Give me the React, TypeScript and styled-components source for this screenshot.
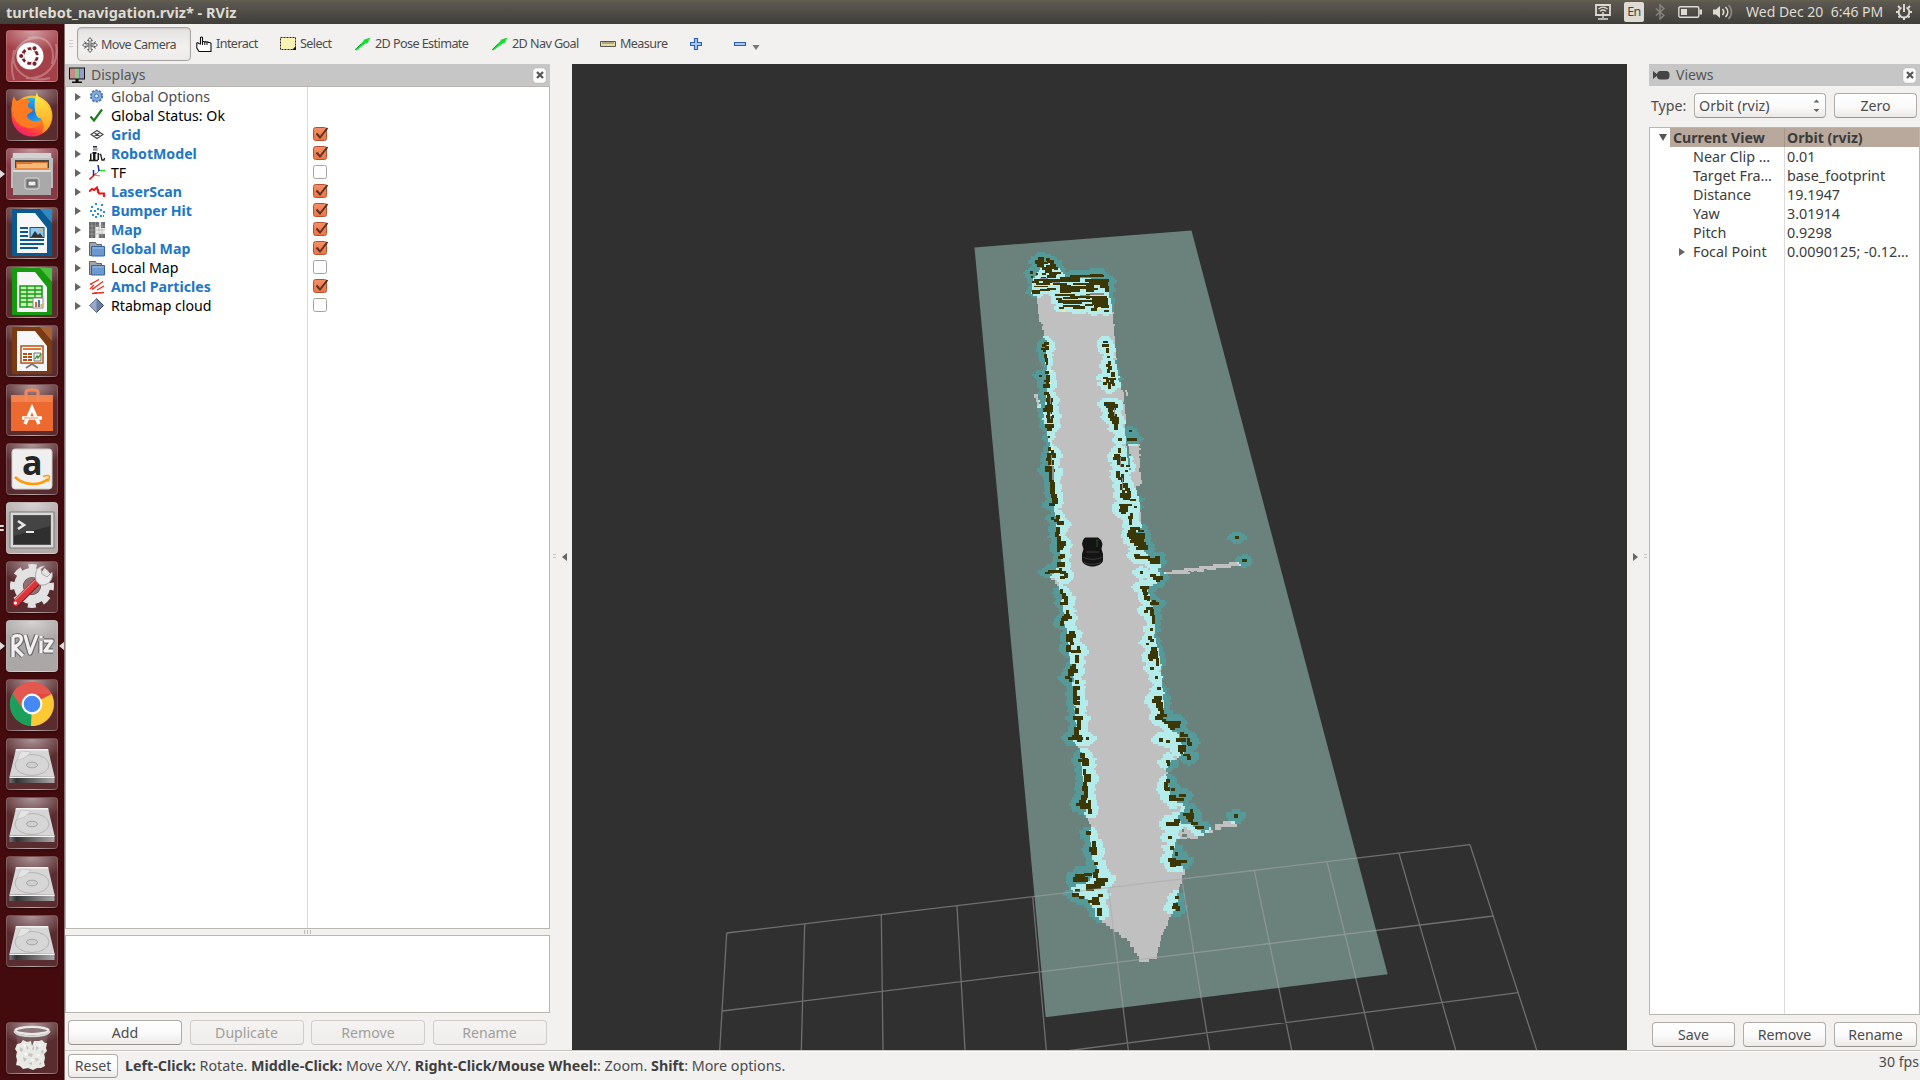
import React from "react";
import styled, { createGlobalStyle, css } from "styled-components";

const Global = createGlobalStyle`
  * { box-sizing: border-box; }
  html, body { margin: 0; padding: 0; background: #f2f1f0; overflow: hidden; }
  body { font-family: "Noto Sans", "Open Sans", sans-serif; font-size: 14.15px; color: #4c4c4c; line-height: 19px; }
`;

/* ---------- shell ---------- */
const Screen = styled.div`
  width: 1920px; height: 1080px; display: flex; flex-direction: column; overflow: hidden; background: #f2f1f0;
`;
const TopBar = styled.header`
  height: 24px; flex: none; display: flex; align-items: center; padding: 0 8px 0 6px;
  background: linear-gradient(#65624f 0, #5c5952 2px, #3f3e38 100%); color: #dfdbd2;
`;
const WindowTitle = styled.h1`
  margin: 0; flex: 1; font-size: 14.5px; font-weight: 700; line-height: 23px; white-space: pre;
`;
const Indicators = styled.div`display: flex; align-items: center; height: 24px;`;
const Indicator = styled.span<{ $w: number }>`
  width: ${(p) => p.$w}px; height: 24px; display: flex; align-items: center; flex: none;
`;
const Lang = styled.span`
  width: 20px; height: 20px; border-radius: 2px; background: #dfdbd2; color: #45433d; font-size: 12.5px; line-height: 20px;
  text-align: center; letter-spacing: -0.6px;
`;
const Clock = styled.span`width: 150px; white-space: pre; font-size: 14px; line-height: 24px;`;
const Body = styled.div`flex: 1; display: flex; min-height: 0;`;

/* ---------- launcher ---------- */
const Launcher = styled.nav`
  width: 65px; flex: none; background: linear-gradient(90deg, #430b0e 0 61px, #3a090c 64px, #8a7574 64px);
  padding: 6px 0 6px 6px; display: flex; flex-direction: column; gap: 7px;
`;
const tones = { dark: "#4b1a1e", red: "#9c3038", rose: "#7c2733", light: "#aaa3a1", grey: "#a5a09f" };
type Tone = keyof typeof tones;
const Tile = styled.div<{ $tone: Tone; $last?: boolean }>`
  width: 52px; height: 52px; flex: none; border-radius: 4px; position: relative;
  border: 1px solid rgba(255, 255, 255, 0.17);
  background: radial-gradient(ellipse 34px 22px at 50% 0, rgba(255, 255, 255, 0.5), rgba(255, 255, 255, 0) 100%),
    linear-gradient(rgba(255, 255, 255, 0.08), rgba(255, 255, 255, 0.08)), ${(p) => tones[p.$tone]};
  box-shadow: 0 1px 2px rgba(0, 0, 0, 0.35);
  ${(p) => p.$last && css`margin-top: auto;`}
  & > svg { display: block; margin: -1px; overflow: visible; }
`;
const Pip = styled.i<{ $side: "l" | "r"; $y: number }>`
  position: absolute; top: ${(p) => p.$y}px; width: 0; height: 0; border: 4px solid transparent;
  ${(p) => (p.$side === "l" ? css`left: -7px; border-left: 5px solid #ddd; border-right: 0;` : css`right: -7px; border-right: 5px solid #ddd; border-left: 0;`)}
`;
const Dash = styled.i<{ $y: number }>`
  position: absolute; left: -7px; top: ${(p) => p.$y}px; width: 4px; height: 2px; background: #ddd; border-radius: 0 1px 1px 0;
`;

/* ---------- window ---------- */
const Window = styled.main`flex: 1; min-width: 0; display: flex; flex-direction: column;`;
const Toolbar = styled.div`height: 40px; flex: none; display: flex; align-items: flex-start; padding-top: 3px;`;
const Grip = styled.span`
  width: 12px; height: 33px; padding-left: 4px; display: flex; align-items: center;
  &::before { content: ""; width: 4px; height: 8px; background: repeating-linear-gradient(#cfcdca 0 1px, transparent 1px 3px); }
`;
const Tool = styled.span<{ $w: number; $active?: boolean }>`
  width: ${(p) => p.$w}px; height: 33px; flex: none; display: flex; align-items: center; gap: 4px;
  font-size: 12.6px; letter-spacing: -0.58px; white-space: nowrap;
  ${(p) => p.$active && css`
    margin-right: 5px; padding: 1px 0 0 4px; height: 34px; border: 1px solid #a9a6a2; border-radius: 4px; gap: 3px;
    background: linear-gradient(#e4e2e0, #f2f1f0 60%, #edebe9); box-shadow: inset 0 1px 2px rgba(0,0,0,.12);
  `}
`;
const Work = styled.div`flex: 1; min-height: 0; display: flex;`;
const Dock = styled.section<{ $w: number }>`width: ${(p) => p.$w}px; flex: none; display: flex; flex-direction: column;`;
const DockTitle = styled.div`
  height: 22px; flex: none; display: flex; align-items: center; gap: 5px; padding: 0 4px 0 4px; background: #c6c6c6; color: #555;
  & > span { flex: 1; line-height: 22px; font-size: 14px; }
`;
const CloseBox = styled.b`
  width: 13px; height: 15px; border: 1px solid #eee; border-radius: 3px; background: #fbfbfb; box-shadow: 0 0 1px #999;
  display: flex; align-items: center; justify-content: center;
`;
const Tree = styled.div<{ $split: number; $h: number }>`
  height: ${(p) => p.$h}px; flex: none; border: 1px solid #b9b6b0; 
  background: linear-gradient(#dcdbd9, #dcdbd9) ${(p) => p.$split}px 0 / 1px 100% no-repeat #fff;
`;
const Row = styled.div<{ $bold?: boolean; $tone?: string }>`
  height: 19px; display: grid; grid-template-columns: 23px 22px 202px 1fr; align-items: center; white-space: nowrap;
  color: ${(p) => p.$tone || "#000"}; font-weight: ${(p) => (p.$bold ? 700 : 400)};
`;
const Expander = styled.i<{ $open?: boolean }>`
  width: 0; height: 0; margin-left: 9px; justify-self: start;
  ${(p) => p.$open ? css`border: 4px solid transparent; border-top: 7px solid #555; border-bottom: 0;`
    : css`border: 4px solid transparent; border-left: 6px solid #666; border-right: 0;`}
`;
const Check = styled.span<{ $on: boolean }>`
  width: 14px; height: 14px; margin-top: -1px; border-radius: 2.5px; border: 1px solid ${(p) => (p.$on ? "#b2532f" : "#a5a29d")};
  background: ${(p) => (p.$on ? "linear-gradient(#f58e66, #ec7547)" : "#fff")};
  & > svg { display: block; overflow: visible; margin: -1px; }
`;
const Splitter = styled.div`
  height: 6px; flex: none; display: flex; align-items: center; justify-content: center;
  &::before { content: ""; width: 7px; height: 4px; background: repeating-linear-gradient(90deg, #bbb 0 1px, transparent 1px 3px); }
`;
const HelpBox = styled.div`height: 78px; flex: none; border: 1px solid #b9b6b0; background: #fff;`;
const Buttons = styled.div<{ $cols: string; $gap: number; $pad: string }>`
  display: grid; grid-template-columns: ${(p) => p.$cols}; gap: ${(p) => p.$gap}px; padding: ${(p) => p.$pad};
`;
const Button = styled.button<{ $off?: boolean; $h?: number }>`
  height: ${(p) => p.$h || 25}px; padding: 0; font: inherit; line-height: 22px; text-align: center;
  color: ${(p) => (p.$off ? "#a09e9b" : "#4c4c4c")};
  border: 1px solid ${(p) => (p.$off ? "#d0cdca" : "#b0ada9")}; border-bottom-color: ${(p) => (p.$off ? "#c5c2bf" : "#989591")};
  border-radius: 4px; background: ${(p) => (p.$off ? "linear-gradient(#f5f4f3, #eeedeb)" : "linear-gradient(#fff, #fbfafa 55%, #ebeae8)")};
`;
const Collapse = styled.div<{ $w: number; $right?: boolean }>`
  width: ${(p) => p.$w}px; flex: none; display: flex; align-items: center; justify-content: center; gap: 6px;
  flex-direction: ${(p) => (p.$right ? "row-reverse" : "row")};
  padding: 0 ${(p) => (p.$right ? "0 0 4px" : "2px 0 0")};
  &::before { content: ""; width: 3px; height: 6px; background: repeating-linear-gradient(#c5c3c0 0 1px, transparent 1px 3px); }
  &::after { content: ""; border: 4px solid transparent; 
    ${(p) => (p.$right ? css`border-left: 5px solid #666; border-right: 0;` : css`border-right: 5px solid #666; border-left: 0;`)} }
`;
const Viewport = styled.div`width: 1055px; flex: none; background: #303030; & > svg { display: block; }`;

const ViewType = styled.div`
  height: 41px; flex: none; display: grid; grid-template-columns: 43px 132px 83px; column-gap: 0; align-items: start; padding: 7px 3px 0 2px;
  & > span { line-height: 25px; }
  & > button { margin-left: 8px; width: 83px; }
`;
const Combo = styled.div`
  height: 25px; border: 1px solid #b0ada9; border-bottom-color: #989591; border-radius: 4px; padding: 0 5px 0 4px; display: flex;
  align-items: center; justify-content: space-between; background: linear-gradient(#fff, #fbfafa 55%, #ebeae8); font-size: 14.3px;
`;
const Prop = styled.div<{ $head?: boolean }>`
  height: 19px; display: grid; grid-template-columns: 20px ${(p) => (p.$head ? "" : "20px")} ${(p) => (p.$head ? 114 : 94)}px 1fr; align-items: center;
  color: #3c3c3c; white-space: nowrap; line-height: 19px; font-size: ${(p) => (p.$head ? 14.15 : 14.35)}px; font-weight: ${(p) => (p.$head ? 700 : 400)};
  ${(p) => p.$head && css`background: linear-gradient(90deg, #fff 20px, #b8a99c 20px 134px, #a3968a 134px 135px, #b8a99c 135px);`}
  & > span { padding-left: 3px; }
`;
const StatusBar = styled.footer`
  height: 30px; flex: none; border-top: 1px solid #c8c5c1; display: flex; align-items: flex-start; padding: 3px 1px 0 3px; gap: 7px;
  box-shadow: inset 0 1px #fbfbfa;
  & > button { width: 50px; }
`;
const Hint = styled.p`margin: 0; flex: 1; line-height: 24px; font-size: 14.3px; white-space: pre; & b { color: #404040; }`;
const Fps = styled.span`line-height: 16px;`;

/* ---------- launcher artwork ---------- */
const S52 = (p: { children: React.ReactNode }) => <svg width="52" height="52" viewBox="0 0 52 52">{p.children}</svg>;
const Ubuntu = () => (
  <S52>
    <g fill="none" stroke="#fff" strokeOpacity=".28" strokeWidth="2">
      <path d="M8 50C1 28 12 8 32 8M44 48C20 54 4 40 8 20M50 14C54 34 40 50 20 48M22 8c20-4 28 10 24 26" />
    </g>
    <circle cx="24" cy="26" r="13.500" fill="#fff" />
    <circle cx="24" cy="26" r="7.400" fill="none" stroke="#7d2029" strokeWidth="2.800" strokeDasharray="13 2.500" strokeDashoffset="-1.300" />
    <g fill="#7d2029" stroke="#fff" strokeWidth="1.200"><circle cx="15.200" cy="26" r="2.700" /><circle cx="28.500" cy="18.300" r="2.700" /><circle cx="28.500" cy="33.700" r="2.700" /></g>
  </S52>
);
const Firefox = () => (
  <S52>
    <defs>
      <linearGradient id="fx" x1=".8" y1="0" x2=".2" y2="1"><stop offset="0" stopColor="#ffdf3a" /><stop offset=".45" stopColor="#ff8a16" /><stop offset=".8" stopColor="#ff3647" /><stop offset="1" stopColor="#e3158a" /></linearGradient>
      <radialGradient id="fb"><stop offset="0" stopColor="#1d6fe0" /><stop offset="1" stopColor="#16b5f5" /></radialGradient>
      <linearGradient id="fy" x1="0" y1="0" x2="0" y2="1"><stop offset="0" stopColor="#fff04a" /><stop offset="1" stopColor="#ff9b1e" /></linearGradient>
    </defs>
    <circle cx="26" cy="27" r="20.500" fill="url(#fx)" />
    <circle cx="25" cy="23" r="14" fill="url(#fb)" />
    <path d="M31 3c0 6 7 8 11 15 6 10 3 22-6 26 3-5 2-12-2-15-4 1-8-12-3-26z" fill="url(#fy)" />
    <path d="M6 15c0-4 2-8 2-8s1 4 3 5c5-3 11-2 14 1-3 0-4 3-2 6 2 1 4 1 4 2-1 3-6 3-6 6 0 5 9 6 14 4 2 5-6 9-14 8C10 37 3 28 6 15z" fill="#ff7b22" />
    <path d="M6 15c-1 10 3 22 16 24-8 2-18-7-16-24z" fill="#ff3a48" />
  </S52>
);
const Files = () => (
  <S52>
    <path d="M7 5h38l1 12H6z" fill="#d2d2d2" /><path d="M5 10h42v30H5z" fill="#bdbdbd" />
    <path d="M9 12h34v12H9z" fill="#4c4844" /><path d="M10 14h32v10H10z" fill="#e0742e" /><path d="M11 16h14l2-1h14v8H11z" fill="#f6b978" /><path d="M9 20h34v3H9z" fill="#e98b45" />
    <path d="M7 22h38v25H7z" fill="#a9a9a9" /><path d="M7 22h38v2H7z" fill="#dcdcdc" />
    <rect x="19" y="30" width="14" height="11" rx="2" fill="#888" stroke="#ddd" /><rect x="22" y="33" width="8" height="5" fill="#eee" stroke="#555" />
  </S52>
);
const Doc = (p: { c: string; f: string; children: React.ReactNode }) => (
  <S52>
    <path d="M7 3h27l11 14v31H7z" fill={p.c} strokeLinejoin="round" stroke={p.c} strokeWidth="2" />
    <path d="M11 6h18l12 15v25H11z" fill="#f7f7f7" /><path d="M34 2h12v14z" fill={p.f} />
    {p.children}
  </S52>
);
const Writer = () => (
  <Doc c="#0a5a92" f="#2b8bc4">
    <path d="M14 21h8M14 25h8M14 29h8M14 33h24M14 37h24M14 41h18" stroke="#0a5a92" strokeWidth="2" />
    <rect x="24" y="20.500" width="14" height="10" fill="#8dc8ee" stroke="#0a5a92" /><path d="M25 30l4-6 3 4 2-2 3 4z" fill="#333" /><circle cx="35" cy="23" r="1.500" fill="#e8b040" />
  </Doc>
);
const Calc = () => (
  <Doc c="#159a10" f="#4cc240">
    <path d="M14 20h22v21H14z" fill="#c8f3b8" stroke="#159a10" strokeWidth="1.500" /><path d="M14 24h22M14 28h22M14 32h22M14 36h22M21 20v21M29 20v21" stroke="#159a10" strokeWidth="1.300" />
    <rect x="27" y="32" width="10" height="10" fill="#fff" stroke="#888" /><path d="M29 36h2v5h-2z" fill="#e0641e" /><path d="M32 34h2v7h-2z" fill="#2c82c8" /><path d="M34.500 38h2v3h-2z" fill="#e8b020" />
  </Doc>
);
const Impress = () => (
  <Doc c="#7a3a12" f="#a8622e">
    <rect x="15" y="21" width="22" height="17" fill="#fff" stroke="#b0501a" strokeWidth="1.500" /><path d="M17 24h18" stroke="#d9793c" strokeWidth="2" />
    <path d="M17 29h4M17 32h4M17 35h4M22 29h4M22 32h4M22 35h4" stroke="#b0501a" strokeWidth="1.800" /><path d="M28 28h7v8h-7z" fill="#eee" stroke="#777" /><path d="M29 34l2-3 1 2 3-4" stroke="#2c9a2c" fill="none" strokeWidth="1.300" />
    <path d="M26 38v2M20 43l6-4 6 4" stroke="#777" strokeWidth="1.800" fill="none" />
  </Doc>
);
const Bag = () => (
  <S52>
    <path d="M5 11h42v36H5z" fill="#ec6a30" /><path d="M5 11h42l-1 7H6z" fill="#f2834c" /><path d="M20 18V8c0-3 12-3 12 0v10" fill="none" stroke="#f08a5c" strokeWidth="3" />
    <path d="M19 40l7-16 7 16M16 34h20" stroke="#fff" strokeWidth="3.400" fill="none" /><path d="M18 34h14" stroke="#f2a070" strokeWidth="1.200" />
  </S52>
);
const Letter = styled.text<{ $size: number }>`font: 700 ${(p) => p.$size}px "Open Sans", sans-serif;`;
const Amazon = () => (
  <S52>
    <rect x="6" y="6" width="40" height="40" rx="3" fill="#efefef" stroke="#ccc" />
    <Letter $size={34} x="16" y="32" fill="#252525">a</Letter>
    <path d="M9 34c9 9 25 9 33 2" fill="none" stroke="#ff9a0c" strokeWidth="2.600" /><path d="M37 33.500c3-1 6-1 6.500 0 0 2-1 4-2 5" fill="none" stroke="#ff9a0c" strokeWidth="1.600" />
  </S52>
);
const Terminal = () => (
  <S52>
    <path d="M4 10h44v36H4z" fill="#d9d9d9" stroke="#777" /><path d="M7 13h38v30H7z" fill="#555" /><path d="M8 14h36v28H8z" fill="#2f2f2f" /><path d="M8 14h36v10L8 34z" fill="#444" />
    <path d="M12 19l6 4-6 4" fill="none" stroke="#e8e8e8" strokeWidth="2.600" /><path d="M20 30h8" stroke="#e8e8e8" strokeWidth="2" />
  </S52>
);
const Settings = () => (
  <S52>
    <circle cx="26" cy="25" r="13.500" fill="none" stroke="#e2e2e2" strokeWidth="9" />
    <circle cx="26" cy="25" r="19.500" fill="none" stroke="#e2e2e2" strokeWidth="5" strokeDasharray="8 7.310" strokeDashoffset="4" />
    <circle cx="26" cy="25" r="8.500" fill="#8f7274" />
    <path d="M10 42L31 21" stroke="#8e1418" strokeWidth="8" strokeLinecap="round" /><path d="M10 42L31 21" stroke="#d9353b" strokeWidth="6" strokeLinecap="round" /><path d="M9 39L29 19" stroke="#f07a7a" strokeWidth="1.200" />
    <path d="M30 20l4 4c8 1 14-5 12-13l-5 5-5-3-1-5 4-3c-7-1-11 5-9 15z" fill="#e9e9e9" stroke="#999" strokeWidth=".8" /><circle cx="9.500" cy="42" r="1.500" fill="#fff" />
  </S52>
);
const RVizMark = () => (
  <S52>
    <g fill="none" strokeLinejoin="round">
      <path d="M7 37V17M7 17c10-5 12 6 1 10l9 9M19 15l5 18 7-18M35 21v12M35 16v2M38 21h8l-7 10h8" stroke="#6f6b6a" strokeWidth="5.500" />
      <path d="M7 37V17M7 17c10-5 12 6 1 10l9 9M19 15l5 18 7-18M35 21v12M35 16v2M38 21h8l-7 10h8" stroke="#f0f0f0" strokeWidth="3.200" />
    </g>
  </S52>
);
const Chrome = () => (
  <S52>
    <circle cx="26" cy="25" r="22" fill="#e2493f" /><path d="M26 25L6.500 14.500A22 22 0 0 0 25 47z" fill="#1ba05c" /><path d="M26 25L25 47a22 22 0 0 0 20.500-32z" fill="#fcc934" />
    <path d="M6.500 14.500A22 22 0 0 1 45.500 15H26L16 29z" fill="#e2584f" /><circle cx="26" cy="25" r="10.400" fill="#fff" /><circle cx="26" cy="25" r="8.300" fill="#4688f4" />
  </S52>
);
const Disk = () => (
  <S52>
    <defs><linearGradient id="dk" x1="0" y1="0" x2="1" y2="0"><stop offset="0" stopColor="#777" /><stop offset=".15" stopColor="#333" /><stop offset="1" stopColor="#aaa" /></linearGradient></defs>
    <path d="M10 11h32l6.500 27.500h-45z" fill="#d6d6d6" /><path d="M10 11h32l.5 1.500h-33z" fill="#f3f3f3" /><path d="M3.500 38.500h45V45h-45z" fill="url(#dk)" /><path d="M3.500 38.500h45v1.500h-45z" fill="#f4f4f4" />
    <ellipse cx="26" cy="27" rx="17" ry="10.500" fill="none" stroke="#b5b5b5" /><ellipse cx="26" cy="27" rx="5.500" ry="2.800" fill="#cfcfcf" stroke="#a5a5a5" /><path d="M11 22c8-1 10-4 14-8l-10-1z" fill="#e4e4e4" stroke="#bbb" strokeWidth=".6" />
  </S52>
);
const Trash = () => (
  <S52>
    <path d="M10 10l4 34c4 4 20 4 24 0l4-34z" fill="#857273" fillOpacity=".45" />
    <g fill="#e9e9e6">
      <path d="M11 22l4-1 2-3 4 2 4-1 1 5 2-5 5 0 3-1 3 3 2 0-1 5 1 3-3 3 1 4-1 4 1 4-4 2-4 0-4 2-5-2-5 1-3-3-4-1 1-5-1-4 1-4-2-3z" />
    </g>
    <g fill="#c3c3bf"><path d="M14 25l3 2-1 3-2-1zM20 23l3 3-2 2zM23 31l4 1-1 3-4-1zM30 24l3 2-3 3zM35 28l3 1-2 4zM29 36l4 1-3 3zM17 35l4 2-3 3zM26 27l2-4 0 6zM22 41l4-1 0 3zM34 40l2 2-3 1z" /></g>
    <g fill="#fff"><path d="M17 22l3 1-1 3zM32 21l3 2-1 2zM18 31l3 0-1 3zM31 32l3 1-2 2zM25 37l3 0-2 2z" /></g>
    <ellipse cx="26" cy="8.500" rx="16.500" ry="3.600" fill="#8d7778" stroke="#e9e9e6" strokeWidth="2.400" /><path d="M8.500 9c0 7 35 7 35 0" fill="none" stroke="#d4d4d1" strokeWidth="2" />
  </S52>
);

const launcher: { art: () => React.JSX.Element; tone: Tone; pip?: number; twin?: boolean; focus?: boolean }[] = [
  { art: Ubuntu, tone: "red" }, { art: Firefox, tone: "dark" }, { art: Files, tone: "rose", pip: 21 }, { art: Writer, tone: "dark" },
  { art: Calc, tone: "dark" }, { art: Impress, tone: "dark" }, { art: Bag, tone: "dark" }, { art: Amazon, tone: "dark" },
  { art: Terminal, tone: "light", twin: true }, { art: Settings, tone: "dark" }, { art: RVizMark, tone: "grey", pip: 21, focus: true },
  { art: Chrome, tone: "dark" }, { art: Disk, tone: "dark" }, { art: Disk, tone: "dark" }, { art: Disk, tone: "dark" }, { art: Disk, tone: "dark" },
];

/* ---------- 16px icons ---------- */
const I = (p: { children: React.ReactNode; w?: number }) => (
  <svg width={p.w || 16} height="16" viewBox={`0 0 ${p.w || 16} 16`}>{p.children}</svg>
);
const icons: Record<string, React.JSX.Element> = {
  options: <I><circle cx="7.500" cy="7" r="5.600" fill="#7fa6d6" stroke="#4a78b5" strokeWidth="2" strokeDasharray="2.400 1.100" /><circle cx="7.500" cy="7" r="4.500" fill="#86abd9" /><circle cx="7.500" cy="7" r="2" fill="#dce8f6" stroke="#4673ad" /></I>,
  ok: <I><path d="M1.500 8.500L5 12.500 13 1.500" fill="none" stroke="#1d7a1d" strokeWidth="2.200" /></I>,
  grid: <I><path d="M2 7.500l6-4 6 4-6 4zM5 5.500l6 4M11 5.500l-6 4" fill="none" stroke="#444" strokeWidth="1.100" /></I>,
  robot: <I><path d="M4 .8h4" stroke="#223" strokeWidth="1.500" /><path d="M4 3.500h4.500" stroke="#99a" strokeWidth="2.500" /><path d="M1 8l1.500-1V14H1zM3.500 6h4v2h-1v6H4V8h-.5zM8.500 7h1.500v7H8.500z" fill="#1a1a1a" /><path d="M0 14.500h9M10.500 8.500h1.200L13 14h2l.6-2" fill="none" stroke="#222" strokeWidth="1.300" /></I>,
  tf: <I><path d="M7 8.500L.5 14.500" stroke="#e02020" strokeWidth="1.600" /><path d="M9 5.500h7" stroke="#20e020" strokeWidth="1.500" /><path d="M10 6L9 0M4.500 11V5" stroke="#2020d0" strokeWidth="1.500" /><path d="M4.500 11.500L10 6M5 10l6 1" stroke="#d08020" fill="none" /></I>,
  laser: <I><path d="M0 7.500l3-2.500 2 1 3-2.500 1 4 1 2h5v3.500M9 5v4" fill="none" stroke="#f01010" strokeWidth="1.900" /></I>,
  bumper: <I><path d="M6 0h2v2H6zM12 1h2v2h-2zM2 3h2v2H2zM8 5h2v2H8zM1 7h2v2H1zM5 7h2v2H5zM11 6h2v2h-2zM14 8h2v2h-2zM8 10h2v2H8zM3 11h2v2H3zM6 13h2v2H6zM11 12h2v2h-2zM14 12h1v2h-1z" fill="#1e90f0" /></I>,
  map: <I><path d="M0 0h16v16H0z" fill="#eee" /><path d="M0 0h10v5H6v11H0zM12 0h4v6h-4zM10 12h6v4h-6z" fill="#6a6a6a" /><path d="M3 0v16M6.500 0v16M10 0v16M13 0v16M0 4h16M0 8h16M0 12h16" stroke="#aaa" strokeWidth=".6" /></I>,
  folder: <I><path d="M.5 1.500h6l1 2h5v11H.5z" fill="#a3a3a3" stroke="#666" /><path d="M2.500 5.500h13v9.500h-13z" fill="#6d99d2" stroke="#37639d" /><path d="M3.500 7h11" stroke="#9fc0ea" /></I>,
  amcl: <I><path d="M1 5.500l9-5M3 10.500l11-8M1 10l4-4M3 14.500l12-1M8 11l7-4" stroke="#ee2a1a" strokeWidth="1.300" /><path d="M1 4.500l3-.5-1 2zM3 9l3-.5-1.500 2zM5 13.300l4 .2-3 1.200z" fill="#ee2a1a" /></I>,
  cloud: <I><path d="M7.500.5l7 7-7 7-7-7z" fill="#6b7fa6" stroke="#3a4868" /><path d="M7.500.5v14l-7-7z" fill="#97a8c8" /></I>,
  monitor: <svg width="17" height="18" viewBox="0 0 17 18"><path d="M0 1.500h16v12H0z" fill="#111" /><path d="M1 2.500h5v10H1z" fill="#c98a8a" /><path d="M6 2.500h4.500v10H6z" fill="#8cc48c" /><path d="M10.500 2.500H15v10h-4.500z" fill="#9a98cf" /><path d="M6.500 13h3v2.500H13V17H3v-1.500h3.500z" fill="#111" /></svg>,
  camera: <svg width="18" height="12" viewBox="0 0 18 12"><path d="M0 2l5 4-5 4z" fill="#444" /><rect x="4" y="2" width="12.500" height="8.500" rx="3.500" fill="#444" /></svg>,
  move: <I><path d="M8 .5l2.500 3H9V7h3.500V5.500l3 2.500-3 2.500V9H9v3.500h1.500L8 15.500l-2.500-3H7V9H3.500v1.500L.5 8l3-2.500V7H7V3.500H5.500z" fill="#eee" stroke="#555" strokeWidth=".9" /><path d="M2 4.500l12 7M14 4.500L2 11.500" stroke="#666" strokeWidth=".8" /></I>,
  hand: <I><path d="M4.500 8V1.500q1-1 2 0V6q1-1 2 0 1-.8 2 .2 1-.7 2 .3 2-.3 2.500 1V15.500H3L.8 12V7q1-.8 2 .5z" fill="#fff" stroke="#111" strokeWidth="1.100" /><path d="M6.500 6v3M8.800 6v3M11 6.500V9" stroke="#111" /></I>,
  select: <I><path d="M.5 1.500h15v12H.5z" fill="#fbf3b4" stroke="#222" strokeDasharray="2 1" /><path d="M16 10v4h-4z" fill="#111" /></I>,
  arrow: <I><path d="M0 13.500l9-9-1-.5L15.500 1.500 12 8l-1-1-9.500 7.500z" fill="#12e030" /><path d="M0 14l6-6" stroke="#0cb02a" /></I>,
  ruler: <I><path d="M.5 5.500h15v5H.5z" fill="#e9dba0" stroke="#555" /><path d="M3 6v2M5 6v2M7 6v2M9 6v2M11 6v2M13 6v2" stroke="#555" strokeWidth=".8" /></I>,
  plus: <I w={12}><path d="M4.500 2.500h3v4h4v3h-4v4h-3v-4h-4v-3h4z" fill="#a9c8f0" stroke="#2f62ab" strokeWidth="1.200" /></I>,
  minus: <I w={12}><path d="M.5 6.500h11v3H.5z" fill="#a9c8f0" stroke="#2f62ab" strokeWidth="1.200" /></I>,
};
const Cross = () => <svg width="8" height="8" viewBox="0 0 8 8"><path d="M1 1l6 6M7 1L1 7" stroke="#555" strokeWidth="2.200" /></svg>;

/* ---------- occupancy map ---------- */
type R = [number, number, number, number];
const OX = 960;
const scaleRects = (oy: number, flat: number[]): R[] => {
  const out: R[] = [];
  for (let i = 0; i < flat.length; i += 4) out.push([OX + flat[i] / 3, oy + flat[i + 1] / 3, flat[i + 2] / 3, flat[i + 3] / 3]);
  return out;
};
const obstacles: R[] = [
  ...scaleRects(220, [
    236,111,14,30, 226,120,25,10, 231,133,18,8, 258,114,10,8, 262,122,20,5, 248,128,14,4, 272,130,8,6, 258,137,16,5, 278,133,10,12, 246,142,28,8, 283,143,10,6, 256,152,20,6,
    268,158,22,6, 246,160,10,5, 290,156,12,4, 210,154,8,6, 213,168,6,6, 228,160,6,4, 262,165,26,8, 245,172,12,3, 222,178,64,4, 218,184,18,3, 250,183,36,5, 300,172,60,6,
    330,166,100,4, 390,162,38,3, 228,190,25,4, 252,190,36,5, 222,198,40,3, 262,205,24,4, 218,211,20,9, 240,208,28,3, 288,179,70,5, 376,178,70,6, 388,186,56,6, 290,190,30,5,
    340,190,80,4, 300,196,32,22, 330,200,64,7, 380,196,20,20, 420,192,24,10, 436,200,10,14, 325,209,34,6, 400,206,14,4, 285,224,60,3, 330,229,110,4, 378,224,10,12,
    310,233,44,4, 296,240,44,8, 288,235,18,3, 310,246,54,6, 340,241,60,3, 398,236,46,18, 404,254,30,8, 310,256,50,4, 340,259,35,6, 376,254,22,3, 394,264,16,8, 432,270,14,5,
    298,262,12,3, 436,256,10,7,
    252,366,14,8, 248,374,8,6, 256,378,10,8, 245,384,22,6, 250,390,8,6, 252,404,9,8, 256,416,6,8, 258,428,6,5, 257,455,10,6, 258,467,12,8, 253,480,12,6, 260,474,9,28, 250,494,14,8, 237,466,8,5,
    254,517,12,6, 262,524,6,12, 258,536,20,8, 262,546,14,12, 255,556,22,8, 250,564,28,10, 262,574,12,22, 258,585,24,8, 262,596,16,12, 256,612,26,12, 262,624,12,8, 264,648,5,6,
    265,682,8,10, 274,690,8,20, 262,700,24,12, 260,714,16,8, 266,722,16,12, 255,738,24,8, 256,748,28,8, 268,758,14,28, 272,786,12,20, 272,800,12,22, 274,822,16,12, 278,834,14,18, 268,850,16,8,
    274,893,8,5, 290,886,8,10, 284,898,12,8, 292,905,20,10, 288,922,10,18, 286,938,10,12, 292,950,10,16, 292,964,24,12, 294,978,14,8, 292,986,8,10,
    430,363,12,5, 428,374,18,6, 438,386,9,12, 442,408,6,5, 444,423,8,10, 438,434,10,6, 444,440,10,8, 442,448,6,10, 454,456,9,14, 430,471,12,6, 440,474,28,5, 438,480,8,8, 452,480,8,12, 444,486,8,20, 430,488,10,5, 456,490,8,6,
    433,548,30,8, 438,556,16,8, 446,562,12,14, 456,556,10,12, 466,552,8,10, 448,576,12,8, 446,584,24,10, 452,592,24,10, 458,602,18,10, 462,612,12,16, 508,630,8,6, 476,655,10,6, 503,656,27,6,
    474,686,8,12, 464,704,16,5, 460,709,22,10, 482,712,15,10, 472,722,10,12, 484,732,8,8, 500,736,10,5, 495,750,8,5, 470,754,8,18, 476,772,8,8, 485,764,6,20, 480,792,8,18, 490,790,14,12,
    496,804,12,8, 480,820,22,12, 486,812,8,20, 502,815,10,18, 490,832,20,6, 512,837,16,5, 478,852,30,6, 482,858,22,12, 478,868,24,8, 484,876,14,5, 502,852,14,4, 522,858,8,6, 510,880,8,8, 504,888,14,8, 508,898,8,16,
    510,922,30,6, 506,930,22,8, 534,930,16,6, 502,940,52,10, 508,950,46,6, 514,956,36,8, 520,964,18,5, 536,968,22,8, 544,976,16,10, 528,982,34,7, 825,950,12,6,
  ]),
  ...scaleRects(540, [
    292,8,20,16, 298,24,10,6, 302,42,12,12, 296,50,12,6, 292,68,22,12, 264,90,34,7, 256,96,14,6, 298,84,6,10, 300,94,18,6, 312,100,10,14, 302,108,12,7, 300,148,8,14, 306,160,12,6, 306,168,18,8, 314,176,10,18, 302,186,14,8,
    318,210,8,14, 314,222,14,8, 308,229,28,7, 304,236,20,6, 302,244,10,14, 328,274,16,8, 320,284,26,10, 318,294,20,10, 330,306,10,8, 320,316,12,20, 334,330,28,9, 352,320,8,10, 346,346,10,22, 338,372,10,10, 332,380,16,8,
    326,388,28,10, 324,398,18,10, 316,408,14,8, 328,414,8,10, 346,422,10,8, 340,440,18,10, 340,450,10,40, 346,470,12,8, 344,484,16,10, 346,504,10,16, 340,530,28,8, 352,538,10,32, 344,562,12,10, 344,574,12,12, 336,586,28,6,
    324,592,44,6, 352,596,14,8, 378,592,8,6, 362,640,12,14, 366,654,18,6, 354,658,32,8, 368,666,18,10, 370,688,8,16, 374,704,18,20, 370,726,10,12, 366,740,18,12, 374,754,8,18, 364,767,16,12, 358,780,18,8, 348,790,40,7,
    360,796,32,10, 386,780,6,28, 386,808,8,12, 380,873,12,12, 396,903,10,20, 388,922,22,12, 394,934,16,10, 404,966,8,8, 848,58,12,8,
    512,0,28,8, 524,8,34,8, 536,16,28,12, 522,44,16,6, 526,50,42,6, 564,56,28,6, 572,62,26,10, 586,50,12,8, 540,94,8,8, 570,104,18,6, 580,110,28,10, 588,120,12,6, 540,138,26,7, 548,146,12,8, 550,156,12,8, 554,164,6,16,
    562,168,8,14, 576,180,10,6, 572,187,24,8, 558,202,20,6, 552,210,10,7, 572,208,8,20, 578,226,6,26, 570,264,8,8, 564,290,12,10, 572,298,10,8, 558,309,8,5, 574,322,16,10, 570,334,22,10, 564,344,30,12, 568,354,10,8,
    588,356,8,20, 572,382,8,6, 586,408,8,8, 592,442,10,7, 582,468,24,10, 578,479,24,8, 588,488,20,14, 596,502,12,10, 602,512,10,14, 592,524,28,6, 586,530,22,10, 606,538,12,8, 614,544,48,7, 624,552,34,10, 632,562,12,8,
    598,596,10,8, 620,601,10,8, 660,576,10,8, 662,582,22,8, 650,594,28,10, 682,596,8,18, 684,608,10,10, 656,616,20,18, 660,634,8,8, 670,642,18,6, 682,650,10,10, 618,660,12,8, 622,668,8,10, 618,718,12,9, 612,728,10,22,
    616,742,12,10, 634,744,10,8, 658,764,20,7, 628,766,18,16, 646,774,24,7, 690,808,8,10, 670,820,30,8, 678,828,22,8, 684,838,14,8, 694,846,18,8, 706,858,26,7, 642,838,16,9, 618,847,38,10, 624,888,12,8, 632,920,8,8,
    646,938,8,10, 624,955,24,9, 632,964,16,16, 646,960,34,9, 640,968,22,9, 822,824,12,8,
  ]),
  ...scaleRects(800, [
    406,207,10,12, 372,220,24,8, 345,224,30,10, 340,232,44,14, 400,218,14,16, 410,234,34,10, 404,244,30,14, 380,254,42,11, 380,265,20,6, 346,268,12,6, 336,281,20,9, 358,288,12,9, 416,283,12,7, 398,292,18,8, 386,300,30,7,
    396,307,22,7, 412,326,12,22, 645,288,10,8, 640,310,12,8, 636,318,22,8, 650,322,9,10,
  ]),
];
type P = [number, number];
const pts = (oy: number, flat: number[]): P[] => {
  const out: P[] = [];
  for (let i = 0; i < flat.length; i += 2) out.push([OX + flat[i] / 3, oy + flat[i + 1] / 3]);
  return out;
};
const corridor: P[] = [
  ...pts(220, [258,122, 240,150, 222,176, 216,190, 214,222, 231,230, 235,290, 247,320, 252,355, 262,366, 258,400, 260,440, 262,470, 262,520, 250,575, 248,600, 256,620, 268,660, 270,700, 272,760, 275,830, 285,870, 290,900, 290,940, 296,990]),
  ...pts(540, [298,30, 300,75, 280,100, 270,115, 292,132, 304,150, 308,200, 308,250, 318,264, 324,280, 324,330, 336,380, 340,430, 344,500, 350,560, 342,610, 360,625, 366,680, 372,760, 376,820, 390,850, 392,900, 396,960]),
  ...pts(800, [408,200, 398,228, 372,250, 334,260, 336,275, 372,292, 398,318, 408,345, 428,366, 445,378, 462,392, 480,404, 500,418, 518,442, 536,470, 536,481, 558,483, 560,490, 570,490, 572,480, 590,474, 600,435, 608,405, 622,370, 634,345, 642,330, 650,300, 650,280, 660,262, 668,235, 674,208]),
  ...pts(540, [672,985, 650,975, 636,950, 645,925, 650,898, 700,900, 735,882, 712,868, 690,850, 665,852, 652,835, 672,808, 668,792, 640,780, 624,748, 622,720, 620,690, 622,670, 650,655, 668,640, 660,600, 650,580, 622,562, 608,530, 608,490, 610,460, 606,420, 604,370, 594,330, 585,290, 582,250, 576,220, 576,190, 567,170, 564,145, 590,130, 608,112, 596,95, 600,76, 575,62, 555,35, 535,20]),
  ...pts(220, [520,960, 545,920, 541,870, 536,830, 526,790, 515,760, 503,720, 498,680, 497,620, 497,580, 488,540, 482,500, 476,460, 470,430, 465,370, 462,325, 458,275, 452,235, 445,215, 442,180, 380,176, 320,172, 304,152, 285,138]),
];
const patches: P[][] = [
  pts(220, [480,510, 492,508, 490,535, 484,545]), pts(220, [495,508, 502,512, 502,530, 496,526]), pts(220, [506,672, 538,670, 540,725, 543,795, 522,798, 514,760, 510,730]),
  pts(220, [222,520, 233,522, 240,565, 230,565]),
  pts(540, [604,98, 700,82, 780,72, 840,66, 840,77, 735,92, 700,98, 640,104]), pts(540, [735,870, 750,862, 752,872, 765,872, 762,882, 735,882]), pts(540, [762,858, 795,846, 828,844, 828,860, 795,860, 770,874]),
];
const inside = (poly: P[], x: number, y: number) => {
  let c = false;
  for (let i = 0, j = poly.length - 1; i < poly.length; j = i++) {
    const [xi, yi] = poly[i], [xj, yj] = poly[j];
    if (yi > y !== yj > y && x < ((xj - xi) * (y - yi)) / (yj - yi) + xi) c = !c;
  }
  return c;
};
const noise = (a: number, b: number) => { const v = Math.sin(a * 127.1 + b * 311.7) * 43758.5453; return v - Math.floor(v); };

function buildCells() {
  const layers = { free: "", near: "", far: "" };
  for (let y = 250; y < 966; ) {
    const t = (y - 250) / 716;
    const h = t < 0.75 ? 2 : 3;
    const rx = 7.6 + t * 2, ry = 5.4 + t * 3;
    const cy = y + h / 2;
    const local = obstacles.filter((o) => cy > o[1] - ry - 1 && cy < o[1] + o[3] + ry + 1);
    const jit = (noise(Math.floor(y / 3), 7) - 0.5) * 3;
    const skew = Math.round(y / 11) % 2;
    let run = "", start = 0;
    const flush = (x: number) => { if (run) layers[run as keyof typeof layers] += `M${start} ${y}h${x - start}v${h}h${start - x}z`; };
    for (let x = 1022 + skew; x < 1252; x += 2) {
      const cx = x + 1;
      const free = inside(corridor, cx + jit * 0.6, cy) || patches.some((p) => inside(p, cx + jit * 0.7, cy));
      let near = false;
      for (const o of local) {
        const dx = Math.max(o[0] - cx, 0, cx - o[0] - o[2]), dy = Math.max(o[1] - cy, 0, cy - o[1] - o[3]);
        if (dx / rx + dy / ry < 0.84 + (noise(Math.floor(y / 4), Math.floor(o[0] / 6)) - 0.5) * 0.3) { near = true; break; }
      }
      const k = near ? (free ? "near" : "far") : free ? "free" : "";
      if (k !== run) { flush(x); run = k; start = x; }
    }
    flush(1252);
    y += h;
  }
  return layers;
}
const cells = buildCells();
const obstaclePath = obstacles.map(([x, y, w, h]) => {
  const x0 = Math.floor(x + 0.3), y0 = Math.floor(y + 0.3), x1 = Math.ceil(x + w - 0.3), y1 = Math.ceil(y + h - 0.3);
  return `M${x0} ${y0}H${x1}V${y1}H${x0}z`;
}).join("");
const gridLines = [
  "M726.7 933L1470 844.7", "M722.3 1011L1493.300 916", "M1070 1050.500L1518.300 992.7",
  "M726.7 933L719.7 1050", "M804.7 924L801.3 1050", "M881.3 914.7L883 1050", "M957 906L965 1050", "M1032.7 896.7L1046.300 1050", "M1108.300 887.7L1128.300 1050",
  "M1181.700 879L1209.700 1050", "M1254.300 870.3L1291.700 1050", "M1327 862L1373.700 1050", "M1399 853.3L1455.700 1050", "M1470 844.7L1536.700 1050",
].join("");

const MapView = () => (
  <svg width="1055" height="986" viewBox="572 64 1055 986">
    <path d="M974.5 247.500L1191.500 230.500L1387.700 974.300L1045.700 1017.300z" fill="#6b817c" />
    <g shapeRendering="crispEdges">
      <path d={cells.free} fill="#c0c0c0" /><path d={cells.far} fill="#559a99" /><path d={cells.near} fill="#b4ecec" />
      <path d={obstaclePath} fill="#3b3706" />
      <path d="M1182 568h2v2h-2zM1188 571h3v1h-3zM1196 566h3v2h-3zM1204 569h3v1h-3zM1194 571h3v2h-3zM1182 834h5v3h-5zM1187 838h3v4h-3zM1182 829h2v3h-2z" fill="#6b817c" />
      <path d="M1052 282h8v1h-8zM1040 278h8v1h-8zM1080 295h10v1h-10zM1090 293h14v2h-14zM1050 396h1v8h-1zM1050 412h1v7h-1zM1051 455h1v10h-1zM1052 466h2v14h-2zM1114 408h1v8h-1zM1122 478h1v12h-1zM1120 457h1v10h-1z" fill="#8c8c8c" />
      <path d="M1050 370h2v2h-2zM1049 382h2v2h-2zM1050 414h2v2h-2zM1051 447h2v3h-2zM1061 518h2v2h-2zM1050 283h3v2h-3zM1062 310h3v2h-3zM1098 307h3v2h-3zM1103 379h3v2h-3zM1112 455h2v2h-2z" fill="#f2ecb0" />
      <path d="M1104 341h3v2h-3zM1104 403h3v2h-3zM1051 504h4v2h-4zM1058 301h3v2h-3zM1044 349h3v1h-3z" fill="#063b45" />
    </g>
    <path d={gridLines} fill="none" stroke="#a8a8ac" strokeOpacity=".52" strokeWidth="1.300" />
    <g>
      <path d="M1085 537.500h13l3 2.500 1.500 4-1 5 1.500 5v6c0 4-6 6.500-10.500 6.500S1082 564 1082 560v-6l1.500-5-1.500-5 1-4z" fill="#141414" />
      <path d="M1083 557c4 3 15 3 19 0M1084 562c4 3 13 3 17 0M1086 552h13" stroke="#3c3c3c" fill="none" strokeWidth="1" />
      <path d="M1097 540v7M1096 540h3" stroke="#1f4a22" strokeWidth="1.200" />
    </g>
  </svg>
);

/* ---------- data ---------- */
const displays: [string, string, "plain" | "grey" | "on" | "off"][] = [
  ["options", "Global Options", "grey"], ["ok", "Global Status: Ok", "plain"], ["grid", "Grid", "on"], ["robot", "RobotModel", "on"], ["tf", "TF", "off"],
  ["laser", "LaserScan", "on"], ["bumper", "Bumper Hit", "on"], ["map", "Map", "on"], ["folder", "Global Map", "on"], ["folder", "Local Map", "off"],
  ["amcl", "Amcl Particles", "on"], ["cloud", "Rtabmap cloud", "off"],
];
const props: [string, string][] = [
  ["Near Clip …", "0.01"], ["Target Fra…", "base_footprint"], ["Distance", "19.1947"], ["Yaw", "3.01914"], ["Pitch", "0.9298"], ["Focal Point", "0.0090125; -0.12…"],
];

export default function App() {
  return (
    <Screen>
      <Global />
      <TopBar>
        <WindowTitle>turtlebot_navigation.rviz* - RViz</WindowTitle>
        <Indicators>
          <Indicator $w={29}><svg width="16" height="18" viewBox="0 0 16 18"><path d="M1 2h14v10H1z" fill="none" stroke="#dfdbd2" strokeWidth="1.800" /><path d="M3.500 6c3-2.500 6-2.500 9 0M5 8.200c2-1.500 4-1.500 6 0M7 10h2M8 12v3M3 16h10" fill="none" stroke="#dfdbd2" strokeWidth="1.400" /></svg></Indicator>
          <Indicator $w={31}><Lang>En</Lang></Indicator>
          <Indicator $w={23}><svg width="10" height="16" viewBox="0 0 10 16"><path d="M1 4.500l8 7-4 3.500V1l4 3.500-8 7" fill="none" stroke="#8a877f" strokeWidth="1.400" /></svg></Indicator>
          <Indicator $w={35}><svg width="24" height="12" viewBox="0 0 24 12"><rect x=".8" y=".8" width="20" height="10.400" rx="1.500" fill="none" stroke="#dfdbd2" strokeWidth="1.400" /><path d="M3 3h6v6H3zM21.500 3.500H24v5h-2.500z" fill="#dfdbd2" /></svg></Indicator>
          <Indicator $w={33}><svg width="20" height="16" viewBox="0 0 20 16"><path d="M0 5.500h3L7 2v12L3 10.500H0z" fill="#dfdbd2" /><path d="M9.500 5c1.600 2 1.600 4 0 6M12.500 3c3 3 3 7 0 10" fill="none" stroke="#dfdbd2" strokeWidth="1.600" /><path d="M15.500 1c4 4 4 10 0 14" fill="none" stroke="#8a877f" strokeWidth="1.600" /></svg></Indicator>
          <Clock>{"Wed Dec 20  6:46 PM"}</Clock>
          <svg width="16" height="16" viewBox="0 0 16 16"><path d="M5.500 3.500a5.300 5.300 0 1 0 5 0M8 0v8" fill="none" stroke="#dfdbd2" strokeWidth="1.900" /><path d="M0 8h2M14 8h2M2 2l2 2M14 2l-2 2M2.500 13.500L4 12M13.500 13.500L12 12M8 14v2" stroke="#dfdbd2" strokeWidth="2" /></svg>
        </Indicators>
      </TopBar>
      <Body>
        <Launcher>
          {launcher.map(({ art: Art, tone, pip, twin, focus }, i) => (
            <Tile key={i} $tone={tone}>
              <Art />
              {pip !== undefined && <Pip $side="l" $y={pip} />}
              {twin && <><Dash $y={22} /><Dash $y={26} /></>}
              {focus && <Pip $side="r" $y={21} />}
            </Tile>
          ))}
          <Tile $tone="dark" $last><Trash /></Tile>
        </Launcher>
        <Window>
          <Toolbar>
            <Grip />
            <Tool $w={114} $active>{icons.move}Move Camera</Tool>
            <Tool $w={84}>{icons.hand}Interact</Tool>
            <Tool $w={75}>{icons.select}Select</Tool>
            <Tool $w={137}>{icons.arrow}2D Pose Estimate</Tool>
            <Tool $w={108}>{icons.arrow}2D Nav Goal</Tool>
            <Tool $w={90}>{icons.ruler}Measure</Tool>
            <Tool $w={44}>{icons.plus}</Tool>
            <Tool $w={30}>{icons.minus}<svg width="10" height="16" viewBox="0 0 10 16"><path d="M2.500 9h7L6 14z" fill="#777" /></svg></Tool>
          </Toolbar>
          <Work>
            <Dock $w={485}>
              <DockTitle>{icons.monitor}<span>Displays</span><CloseBox><Cross /></CloseBox></DockTitle>
              <Tree $split={241} $h={843}>
                {displays.map(([icon, name, kind], i) => (
                  <Row key={i} $bold={kind === "on"} $tone={kind === "on" ? "#2077c6" : kind === "grey" ? "#4c4c4c" : "#000"}>
                    <Expander />{icons[icon]}<span>{name}</span>
                    {(kind === "on" || kind === "off") && (
                      <Check $on={kind === "on"}>{kind === "on" && <svg width="14" height="14"><path d="M3.500 6.500l3.500 4L14.500 1" fill="none" stroke="#5b3325" strokeWidth="2" /></svg>}</Check>
                    )}
                  </Row>
                ))}
              </Tree>
              <Splitter />
              <HelpBox />
              <Buttons $cols="114px 114px 114px 114px" $gap={7.5} $pad="7px 0 0 3px">
                <Button>Add</Button><Button $off>Duplicate</Button><Button $off>Remove</Button><Button $off>Rename</Button>
              </Buttons>
            </Dock>
            <Collapse $w={22} />
            <Viewport><MapView /></Viewport>
            <Collapse $w={22} $right />
            <Dock $w={271}>
              <DockTitle>{icons.camera}<span>Views</span><CloseBox><Cross /></CloseBox></DockTitle>
              <ViewType>
                <span>Type:</span>
                <Combo>Orbit (rviz)<svg width="7" height="15" viewBox="0 0 7 15"><path d="M.5 4.500h6L3.500 1.500zM.5 11h6L3.500 14z" fill="#666" /></svg></Combo>
                <Button>Zero</Button>
              </ViewType>
              <Tree $split={134} $h={888}>
                <Prop $head><Expander $open /><span>Current View</span><span>Orbit (rviz)</span></Prop>
                {props.map(([k, v]) => (
                  <Prop key={k}><span />{k === "Focal Point" ? <Expander /> : <span />}<span>{k}</span><span>{v}</span></Prop>
                ))}
              </Tree>
              <Buttons $cols="83px 83px 83px" $gap={8} $pad="7px 0 0 3px">
                <Button>Save</Button><Button>Remove</Button><Button>Rename</Button>
              </Buttons>
            </Dock>
          </Work>
          <StatusBar>
            <Button $h={24}>Reset</Button>
            <Hint><b>Left-Click:</b> Rotate. <b>Middle-Click:</b> Move X/Y. <b>Right-Click/Mouse Wheel:</b>: Zoom. <b>Shift</b>: More options.</Hint>
            <Fps>30 fps</Fps>
          </StatusBar>
        </Window>
      </Body>
    </Screen>
  );
}
